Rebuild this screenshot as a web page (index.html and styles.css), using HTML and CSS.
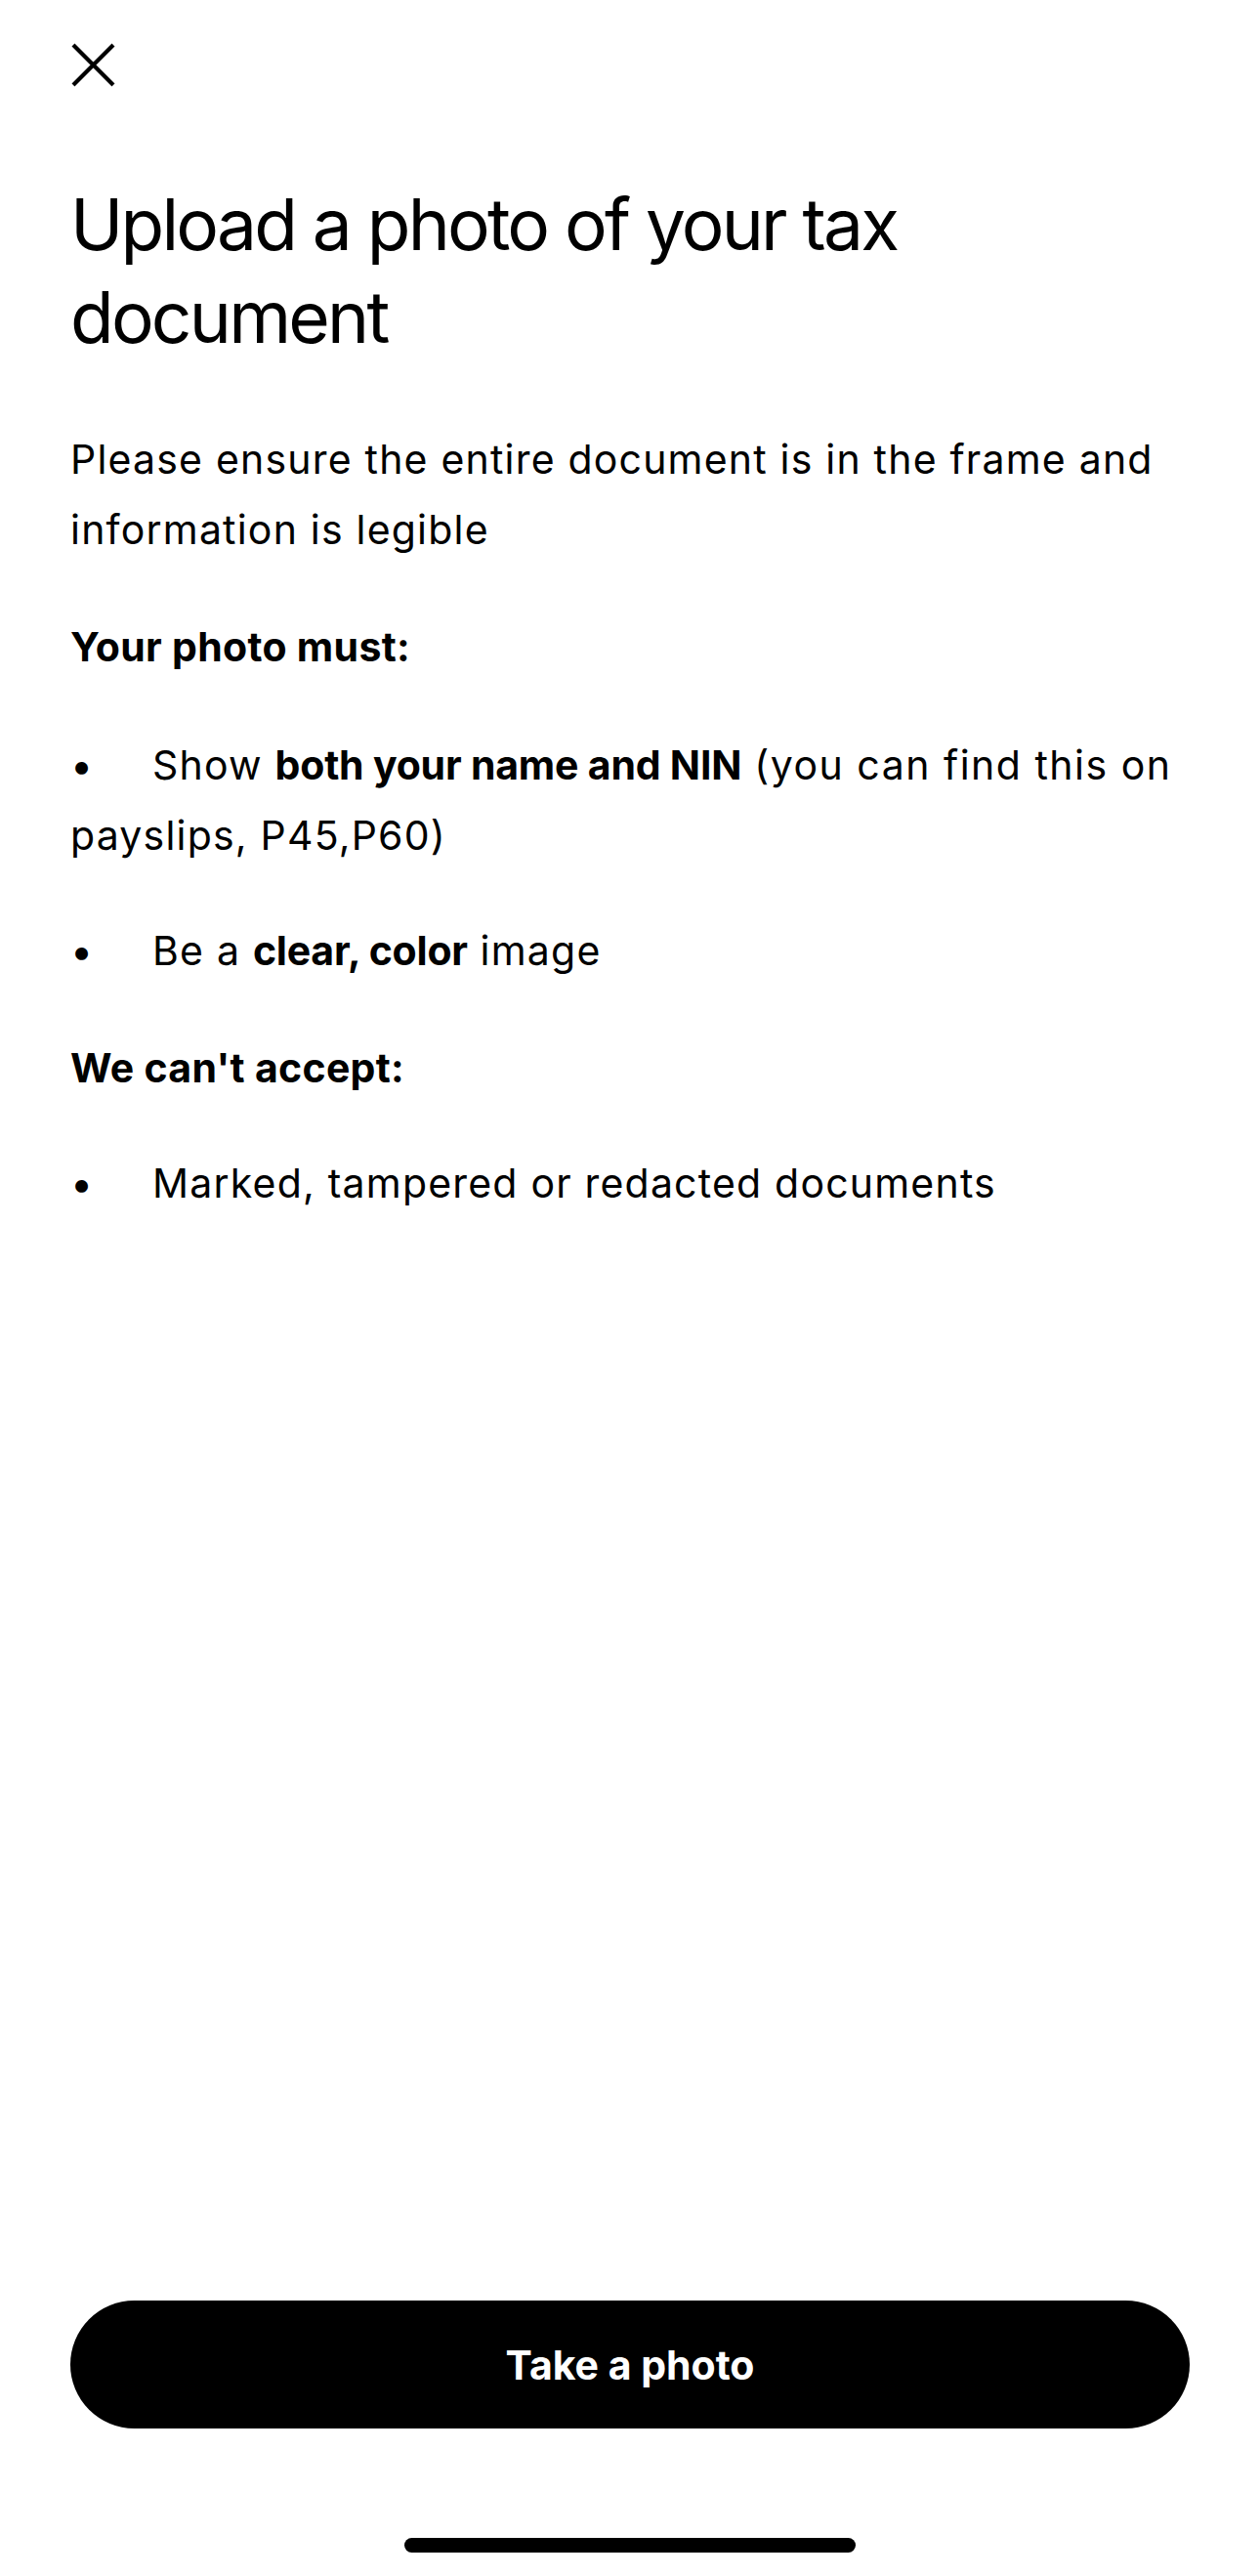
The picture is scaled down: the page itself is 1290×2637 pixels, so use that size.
FILE: index.html
```html
<!DOCTYPE html>
<html lang="en">
<head>
<meta charset="utf-8">
<title>Upload a photo of your tax document</title>
<link rel="stylesheet" href="styles.css">
</head>
<body>
<div class="screen">
  <header class="topbar">
    <button class="close" aria-label="Close">
      <svg width="45" height="45" viewBox="0 0 45 45"><path d="M2 2 L43 43 M43 2 L2 43" stroke="#000" stroke-width="4.2" stroke-linecap="butt" fill="none"/></svg>
    </button>
  </header>
  <main class="content">
    <h1 class="title">Upload a photo of your tax document</h1>
    <p class="text intro">Please ensure the entire document is in the frame and information is legible</p>
    <p class="text heading h-must">Your photo must:</p>
    <p class="text item item-1"><span class="dot">•</span><span>Show </span><b>both your name and NIN</b><span class="wide"> (you can find this on</span><br><span>payslips, P45,P60)</span></p>
    <p class="text item item-2"><span class="dot">•</span>Be a <b>clear, color</b> image</p>
    <p class="text heading h-cant">We can't accept:</p>
    <p class="text item item-3"><span class="dot">•</span>Marked, tampered or redacted documents</p>
  </main>
  <footer class="footer">
    <button class="cta">Take a photo</button>
    <div class="home-indicator"></div>
  </footer>
</div>
</body>
</html>
```
FILE: styles.css
```css
html, body {
  margin: 0;
  padding: 0;
  background: #fff;
}
body {
  font-family: Inter, "Noto Sans", "Liberation Sans", sans-serif;
  color: #000;
}
.screen {
  width: 1290px;
  height: 2637px;
  display: flex;
  flex-direction: column;
  box-sizing: border-box;
}
.topbar {
  padding: 44px 72px 0 73px;
  height: 45px;
}
.close {
  border: 0;
  background: none;
  padding: 0;
  width: 45px;
  height: 45px;
  display: block;
}
.close svg { display: block; }
.content {
  padding: 0 72px;
}
.title {
  margin: 93px 0 0 0;
  font-size: 73px;
  line-height: 95px;
  font-weight: 400;
  letter-spacing: -2.8px;
  width: 960px;
}
.text {
  margin: 0;
  font-size: 41px;
  line-height: 72px;
  font-weight: 400;
  letter-spacing: 1.2px;
}
.text b {
  font-weight: 700;
  letter-spacing: -0.2px;
}
.text .wide { letter-spacing: 1.5px; }
.intro { margin-top: 62px; }
.heading {
  font-weight: 700;
  letter-spacing: 0.3px;
}
.h-must { margin-top: 48px; }
.item-1 { margin-top: 49px; }
.item-2 { margin-top: 46px; }
.h-cant { margin-top: 48px; }
.item-3 { margin-top: 46px; }
.dot {
  margin-right: 61px;
  letter-spacing: 0;
}
.footer {
  margin-top: auto;
  padding: 0 72px 24px;
  display: flex;
  flex-direction: column;
  align-items: center;
}
.cta {
  width: 100%;
  height: 131px;
  border: 0;
  border-radius: 66px;
  background: #000;
  color: #fff;
  font-family: Inter, "Noto Sans", "Liberation Sans", sans-serif;
  font-size: 41px;
  font-weight: 700;
  padding: 0;
}
.home-indicator {
  margin-top: 112px;
  width: 462px;
  height: 15px;
  border-radius: 8px;
  background: #000;
}
```
